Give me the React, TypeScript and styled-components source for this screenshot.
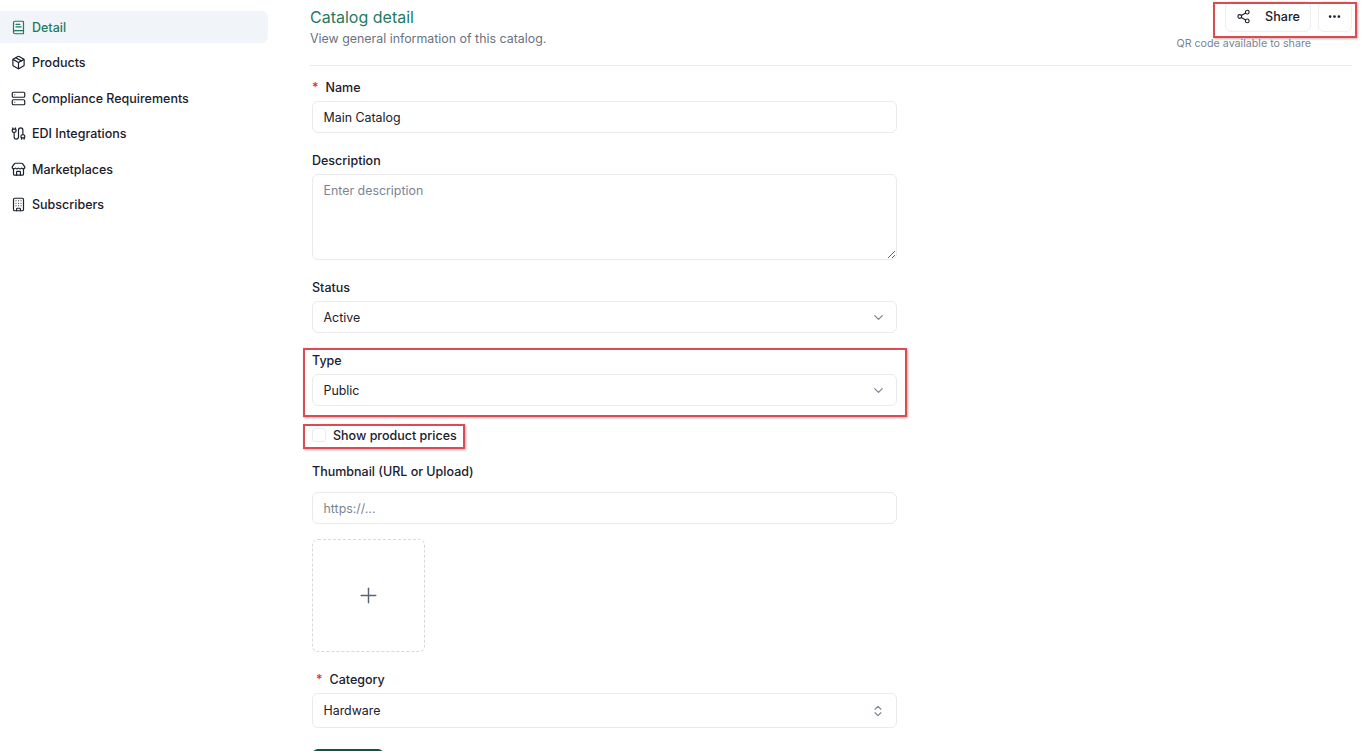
import styled, { createGlobalStyle } from "styled-components";
import {
  BookText,
  Building,
  Cable,
  ChevronDown,
  ChevronsUpDown,
  Ellipsis,
  Package,
  Plus,
  Server,
  Share2,
  Store,
} from "lucide-react";

const GlobalStyle = createGlobalStyle`
  html, body {
    margin: 0;
    padding: 0;
    background: #fff;
    overflow: hidden;
  }
  * {
    box-sizing: border-box;
  }
  body {
    font-family: Inter, "Liberation Sans", sans-serif;
    color: #111827;
  }
`;

const navItems = [
  { label: "Detail", icon: BookText, active: true },
  { label: "Products", icon: Package },
  { label: "Compliance Requirements", icon: Server },
  { label: "EDI Integrations", icon: Cable },
  { label: "Marketplaces", icon: Store },
  { label: "Subscribers", icon: Building },
];

const App = () => {
  return (
    <SPage>
      <GlobalStyle />
      <SSidebar>
        {navItems.map(item => (
          <SNavItem key={item.label} $active={item.active}>
            <item.icon size={15} strokeWidth={1.9} />
            {item.label}
          </SNavItem>
        ))}
      </SSidebar>
      <SMain>
        <SHeader>
          <div>
            <STitle>Catalog detail</STitle>
            <SSubtitle>View general information of this catalog.</SSubtitle>
          </div>
          <SActions>
            <SActionRow>
              <SShareButton>
                <Share2 size={15} strokeWidth={1.8} />
                Share
              </SShareButton>
              <SMoreButton aria-label="More">
                <Ellipsis size={15} strokeWidth={2.4} />
              </SMoreButton>
              <SMark $top={1} $right={-5} $bottom={-6} $left={-12} />
            </SActionRow>
            <SHint>QR code available to share</SHint>
          </SActions>
        </SHeader>
        <SForm>
          <SField>
            <SLabel $required>Name</SLabel>
            <SInput defaultValue="Main Catalog" />
          </SField>
          <SField>
            <SLabel>Description</SLabel>
            <STextarea placeholder="Enter description" />
          </SField>
          <SField>
            <SLabel>Status</SLabel>
            <SSelect>
              Active
              <ChevronDown size={15} />
            </SSelect>
          </SField>
          <SField>
            <SLabel>Type</SLabel>
            <SSelect>
              Public
              <ChevronDown size={15} />
            </SSelect>
            <SMark $top={-2} $right={-10} $bottom={-11} $left={-9} />
          </SField>
          <SCheckRow>
            <SCheckBox />
            Show product prices
            <SMark $top={-1} $right={-8} $bottom={-4} $left={-9} />
          </SCheckRow>
          <SThumbField>
            <SThumbLabel>Thumbnail (URL or Upload)</SThumbLabel>
            <SInput placeholder="https://..." />
            <SUpload>
              <Plus size={25} strokeWidth={1.4} />
            </SUpload>
          </SThumbField>
          <SField>
            <SLabel $required $narrow>
              Category
            </SLabel>
            <SCategorySelect>
              Hardware
              <ChevronsUpDown size={14} />
            </SCategorySelect>
          </SField>
          <SSave aria-label="Save" />
        </SForm>
      </SMain>
    </SPage>
  );
};

const SPage = styled.div`
  display: flex;
  height: 751px;
  overflow: hidden;
`;

const SSidebar = styled.nav`
  width: 268px;
  flex: none;
  margin-right: 42px;
  padding-top: 11px;
  display: flex;
  flex-direction: column;
  gap: 3.5px;
`;

const SNavItem = styled.a<{ $active?: boolean }>`
  display: flex;
  align-items: center;
  gap: 6px;
  height: 32px;
  padding-left: 11px;
  font-size: 12.5px;
  font-weight: 450;
  border-radius: 0 6px 6px 0;
  color: ${p => (p.$active ? "#1f7a5f" : "#1a202c")};
  background: ${p => (p.$active ? "#f1f5f9" : "transparent")};
`;

const SMain = styled.main`
  width: 1042px;
  flex: none;
`;

const SHeader = styled.header`
  display: flex;
  justify-content: space-between;
  height: 66px;
  border-bottom: 1px solid #e8eaed;
  padding-top: 6px;
`;

const STitle = styled.h1`
  margin: 0;
  font-size: 16px;
  line-height: 22px;
  font-weight: 400;
  color: #1f7a5f;
`;

const SSubtitle = styled.p`
  margin: 1px 0 0;
  font-size: 12.4px;
  line-height: 20px;
  color: #6b7280;
`;

const SActions = styled.div`
  margin-top: -5px;
  display: flex;
  flex-direction: column;
  align-items: flex-end;
`;

const SActionRow = styled.div`
  position: relative;
  display: flex;
  gap: 7px;
`;

const SShareButton = styled.button`
  width: 86px;
  height: 31px;
  display: flex;
  align-items: center;
  justify-content: center;
  gap: 14px;
  padding: 0;
  font: 450 12.6px Inter, sans-serif;
  color: #1a202c;
  background: #fff;
  border: 1px solid #eceef1;
  border-radius: 6px;
`;

const SMoreButton = styled.button`
  width: 34px;
  height: 31px;
  display: flex;
  align-items: center;
  justify-content: center;
  padding: 0 1px 0 0;
  color: #1a202c;
  background: #fff;
  border: 1px solid #eceef1;
  border-radius: 6px;
`;

const SHint = styled.div`
  margin: 4px 41px 0 0;
  text-align: right;
  font-size: 10.7px;
  line-height: 16px;
  color: #7b8494;
`;

const SMark = styled.span<{ $top: number; $right: number; $bottom: number; $left: number }>`
  position: absolute;
  top: ${p => p.$top}px;
  right: ${p => p.$right}px;
  bottom: ${p => p.$bottom}px;
  left: ${p => p.$left}px;
  border: 2px solid #dc4a52;
  box-shadow: 1px 1px 2px rgba(90, 60, 60, 0.4);
  pointer-events: none;
`;

const SForm = styled.div`
  width: 585px;
  margin: 11px 0 0 2px;
  display: flex;
  flex-direction: column;
`;

const SField = styled.div`
  position: relative;
  margin-bottom: 17px;
`;

const SLabel = styled.label<{ $required?: boolean; $narrow?: boolean }>`
  display: block;
  height: 20px;
  margin-bottom: 4px;
  font-size: 12.5px;
  line-height: 22px;
  font-weight: 450;
  color: #1a202c;
  ${p =>
    p.$required &&
    `
    &::before {
      content: "*";
      color: #e11d48;
      margin: 0 ${p.$narrow ? 7 : 7}px 0 ${p.$narrow ? 4 : 0}px;
    }
  `}
`;

const inputBase = `
  display: block;
  width: 100%;
  border: 1px solid #e8eaed;
  border-radius: 6px;
  background: #fff;
  padding: 0 10.5px;
  font: 400 12.4px Inter, sans-serif;
  color: #1a202c;
  outline: none;
  &::placeholder {
    color: #7b8494;
  }
`;

const SInput = styled.input`
  ${inputBase}
  height: 32px;
`;

const STextarea = styled.textarea`
  ${inputBase}
  height: 86px;
  padding-top: 7px;
  line-height: 18px;
`;

const SSelect = styled.div`
  ${inputBase}
  height: 32px;
  display: flex;
  align-items: center;
  justify-content: space-between;
  padding-right: 10px;
  svg {
    color: #7b8494;
  }
`;

const SCategorySelect = styled(SSelect)`
  height: 35px;
  padding-right: 11px;
`;

const SCheckRow = styled.label`
  position: relative;
  display: flex;
  align-items: center;
  gap: 7px;
  align-self: flex-start;
  height: 20px;
  margin: 2px 0 16px;
  font-size: 12.5px;
  font-weight: 450;
  color: #1a202c;
`;

const SCheckBox = styled.span`
  width: 14px;
  height: 14px;
  border: 1px solid #e8eaed;
  border-radius: 3px;
  background: #fff;
`;

const SThumbField = styled.div`
  margin-bottom: 17px;
`;

const SThumbLabel = styled(SLabel)`
  margin-bottom: 11px;
`;

const SUpload = styled.div`
  width: 113px;
  height: 113px;
  margin-top: 15px;
  display: flex;
  align-items: center;
  justify-content: center;
  border: 1px dashed #d5d9df;
  border-radius: 6px;
  color: #5b6472;
`;

const SSave = styled.button`
  width: 72px;
  height: 32px;
  margin-top: 4px;
  border: 0;
  border-radius: 6px;
  background: #14533f;
`;

export default App;
